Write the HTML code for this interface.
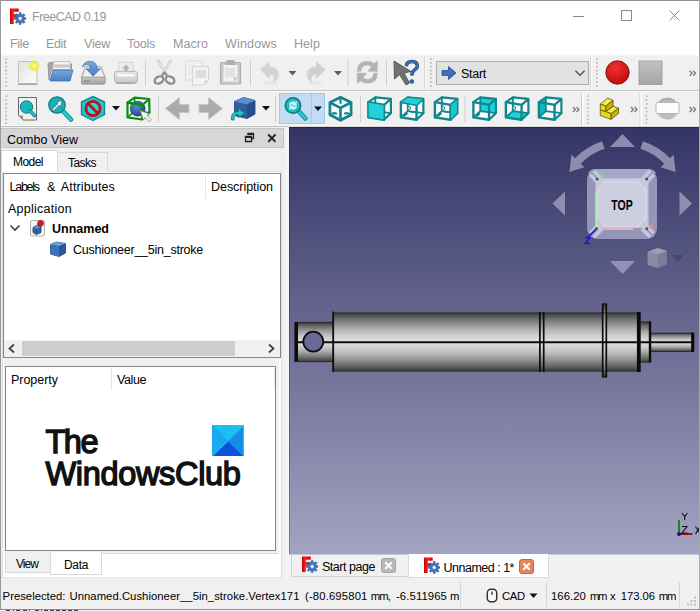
<!DOCTYPE html>
<html><head><meta charset="utf-8"><title>FreeCAD 0.19</title>
<style>
html,body{margin:0;padding:0;background:#fff;}
body{width:700px;height:611px;overflow:hidden;font-family:"Liberation Sans",sans-serif;}
#win{position:relative;width:700px;height:611px;overflow:hidden;background:#f0f0f0;}
#win div, #win svg, #win span{position:absolute;box-sizing:border-box;}
.t{white-space:nowrap;}

</style></head>
<body>
<div id="win">
<svg style="left:0;top:0;width:0;height:0" width="0" height="0">
 <defs>
  <linearGradient id="fred" x1="0" y1="0" x2="1" y2="0"><stop offset="0" stop-color="#c40000"/><stop offset=".35" stop-color="#ff1c1c"/><stop offset="1" stop-color="#c80606"/></linearGradient>
  <g id="fclogo">
   <path d="M10 8h8.700v3.300h-4.900v2.500h3.700v3h-3.700v6.800h-3.800z" fill="url(#fred)"/>
   <g transform="translate(20.200 18)">
    <path id="gear" fill="#4676ba" stroke="#2f5796" stroke-width=".6" stroke-linejoin="round" d="M-1.00 -4.18L-0.76 -6.05L0.76 -6.05L1.00 -4.18L2.25 -3.67L3.74 -4.82L4.82 -3.74L3.67 -2.25L4.18 -1.00L6.05 -0.76L6.05 0.76L4.18 1.00L3.67 2.25L4.82 3.74L3.74 4.82L2.25 3.67L1.00 4.18L0.76 6.05L-0.76 6.05L-1.00 4.18L-2.25 3.67L-3.74 4.82L-4.82 3.74L-3.67 2.25L-4.18 1.00L-6.05 0.76L-6.05 -0.76L-4.18 -1.00L-3.67 -2.25L-4.82 -3.74L-3.74 -4.82L-2.25 -3.67z"/>
    <circle r="1.9" fill="#fff" stroke="#2f5796" stroke-width=".5"/>
   </g>
  </g>
  <g id="chev2"><path d="M.7 .6l2.400 2.500l-2.400 2.500M4.200 .6l2.400 2.500l-2.400 2.500" fill="none" stroke="#757575" stroke-width="1.25"/></g>
 </defs>
</svg>
<!-- title + menu (white) -->
<div style="left:0;top:0;width:700px;height:55px;background:#fff"></div>
<svg style="left:9px;top:7.500px" width="17" height="17" viewBox="9 7.500 17 17"><use href="#fclogo"/></svg>
<!-- window controls -->
<svg style="left:570px;top:8px" width="124" height="16" viewBox="570 8 124 16" fill="none" stroke="#8a8a8a" stroke-width="1"><path d="M573 16.500h11"/><rect x="621.500" y="10.500" width="10" height="10"/><path d="M669.500 10.500l10 10M679.500 10.500l-10 10"/></svg>
<!-- toolbars background -->
<div style="left:0;top:55px;width:700px;height:72px;background:#f0f0f0"></div>
<div style="left:0;top:55px;width:700px;height:1px;background:#f7f7f7"></div>
<div style="left:0;top:90px;width:700px;height:1px;background:#c4c4c4"></div>
<div style="left:0;top:91px;width:700px;height:1px;background:#fbfbfb"></div>
<div style="left:0;top:125px;width:700px;height:2px;background:#f8f8f8"></div>
<div style="left:0;top:126px;width:289px;height:1px;background:#bdbdbd"></div>
<div style="left:289px;top:126px;width:411px;height:1px;background:#d6d6d6"></div>

<!-- TOOLBAR ROW 1 ICONS -->
<svg style="left:0;top:55px" width="700" height="36" viewBox="0 55 700 36">
 <defs>
  <linearGradient id="pg" x1="0" y1="0" x2="1" y2="1"><stop offset="0" stop-color="#e2e2e2"/><stop offset="1" stop-color="#fdfdfd"/></linearGradient>
  <radialGradient id="glow"><stop offset="0" stop-color="#fffde8"/><stop offset=".3" stop-color="#f8f150"/><stop offset=".65" stop-color="#f2ea30" stop-opacity=".85"/><stop offset="1" stop-color="#f2ea30" stop-opacity="0"/></radialGradient>
  <linearGradient id="bl" x1="0" y1="0" x2="0" y2="1"><stop offset="0" stop-color="#7aa7dd"/><stop offset="1" stop-color="#4a7fc4"/></linearGradient>
  <linearGradient id="gr" x1="0" y1="0" x2="0" y2="1"><stop offset="0" stop-color="#e8e8e8"/><stop offset="1" stop-color="#b8b8b8"/></linearGradient>
  <radialGradient id="redb" cx=".4" cy=".3" r=".8"><stop offset="0" stop-color="#f43030"/><stop offset="1" stop-color="#b80808"/></radialGradient>
  <linearGradient id="gsv" x1="0" y1="0" x2="0" y2="1"><stop offset="0" stop-color="#c6c6c6"/><stop offset="1" stop-color="#a2a2a2"/></linearGradient>
  <linearGradient id="gpr" x1="0" y1="0" x2="0" y2="1"><stop offset="0" stop-color="#e8e8e8"/><stop offset="1" stop-color="#c9c9c9"/></linearGradient>
  <linearGradient id="gsq" x1="0" y1="0" x2="0" y2="1"><stop offset="0" stop-color="#c2c2c2"/><stop offset="1" stop-color="#a6a6a6"/></linearGradient>
  <g id="hdl" fill="#b6b6b6"><path d="M0.5 0.00h1.600l-.3 1.800h-1.600z"/><path d="M0.1 3.86h1.600l-.3 1.800h-1.600z"/><path d="M0.5 7.72h1.600l-.3 1.800h-1.600z"/><path d="M0.1 11.58h1.600l-.3 1.800h-1.600z"/><path d="M0.5 15.44h1.600l-.3 1.800h-1.600z"/><path d="M0.1 19.30h1.600l-.3 1.800h-1.600z"/><path d="M0.5 23.16h1.600l-.3 1.800h-1.600z"/><path d="M0.1 27.02h1.600l-.3 1.800h-1.600z"/></g>
 </defs>
 <use href="#hdl" x="5.2" y="58"/>
 <!-- new -->
 <rect x="18.500" y="61.500" width="18.500" height="22" rx="1" fill="url(#pg)" stroke="#bdbdbd"/>
 <path d="M18 84.300h19.500" stroke="#a0a0a0" stroke-width="1.200"/>
 <circle cx="34" cy="66" r="6.2" fill="url(#glow)"/>
 <!-- open -->
 <path d="M48 63.500l1-1h4l1 1.500h17.500v5h-20l-2.500 11z" fill="#a8a8a8" stroke="#8a8a8a" stroke-width=".8"/>
 <path d="M53.500 61.500h16.500l.5 8h-18z" fill="#f2f2f2" stroke="#b0b0b0" stroke-width=".7"/>
 <path d="M54 64.500h16v3h-16.500z" fill="#c8c8c8"/>
 <path d="M53 70h20l-3 11h-20z" fill="url(#bl)" stroke="#3f6fb0" stroke-width=".8"/>
 <!-- save -->
 <path d="M85.5 66.5h15.500l4 10.500v6q0 1-1 1h-21.500q-1 0-1-1v-6z" fill="#dadada" stroke="#a6a6a6" stroke-width=".9"/>
 <path d="M86.300 67.800h13.900l3.200 8.700h-20.300z" fill="#f0f0f0"/>
 <path d="M81.600 77.200h23.400v5.800q0 1-1 1h-21.400q-1 0-1-1z" fill="url(#gsv)" stroke="#999" stroke-width=".8"/>
 <path d="M84 81h5.500" stroke="#888" stroke-width="1.300"/>
 <path d="M82.600 67.200q.8-6 7.400-6q6.800 0 7.200 7.600h3.300l-7.300 7.400l-7.200-7.400h4.300q-.2-4.400-3.600-4.400q-2.400 0-4.100 2.800z" fill="url(#bl)" stroke="#3a69aa" stroke-width=".6"/>
 <!-- print (disabled) -->
 <path d="M118.800 62.300h14.400v10h-14.400z" fill="#ededed" stroke="#cdcdcd" stroke-width=".8"/>
 <path d="M126 64.500l3.800 4.300h-2.200v3.200h-3.200v-3.200h-2.200z" fill="#b4b4b4"/>
 <rect x="114.500" y="71.300" width="23" height="11.400" rx="2.500" fill="url(#gpr)" stroke="#b0b0b0" stroke-width=".9"/>
 <path d="M117.500 75.300h17" stroke="#fbfbfb" stroke-width="2.200"/>
 <path d="M116.500 83.200h19" stroke="#a0a0a0" stroke-width="1.300"/>
 <rect class="s" x="145" y="60" width="1" height="26" fill="#cdcdcd"/>
 <!-- cut (disabled) -->
 <g fill="none">
  <path d="M158.500 61l8.500 14.500M170.500 61l-8.500 14.500" stroke="#c9c9c9" stroke-width="2.600" stroke-linecap="round"/>
  <path d="M158.500 61l8.500 14.500M170.500 61l-8.500 14.500" stroke="#f2f2f2" stroke-width="1"/>
  <ellipse cx="159" cy="80" rx="4.600" ry="3.300" transform="rotate(-30 159 80)" stroke="#8e8e8e" stroke-width="2.400"/>
  <ellipse cx="170" cy="80" rx="4.600" ry="3.300" transform="rotate(30 170 80)" stroke="#8e8e8e" stroke-width="2.400"/>
  <path d="M162 75.500l2.500-3l2.500 3" stroke="#8e8e8e" stroke-width="2"/>
 </g>
 <!-- copy (disabled) -->
 <g opacity=".8">
  <rect x="185.500" y="61" width="17" height="19" rx="1" fill="#f1f1f1" stroke="#d4d4d4"/>
  <path d="M188.500 66h6M188.500 68.500h6M188.500 71h6M188.500 73.500h6" stroke="#dcdcdc" stroke-width=".9"/>
  <path d="M192.500 66.500h16v14l-4 4.500h-12z" fill="#f4f4f4" stroke="#cfcfcf"/>
  <rect x="195.500" y="70" width="10.500" height="8" fill="#d9d9d9"/>
  <path d="M208.500 80.500h-4v4.500z" fill="#d0d0d0"/>
 </g>
 <!-- paste (disabled) -->
 <g opacity=".85">
  <rect x="220.500" y="62.500" width="20" height="21.500" rx="1" fill="#c4c4c4" stroke="#a4a4a4" stroke-width="1.200"/>
  <rect x="223.500" y="65" width="14" height="16.500" fill="#f3f3f3"/>
  <rect x="226" y="60" width="9" height="5" rx="1.500" fill="#a6a6a6"/>
  <rect x="225" y="68" width="10" height="9.500" fill="#e0e0e0"/>
  <path d="M237.500 77.500h-3.500v4z" fill="#b8b8b8"/>
 </g>
 <rect x="250" y="60" width="1" height="26" fill="#cdcdcd"/>
 <!-- undo (disabled) -->
 <path d="M260 69.500l9.500-8v5q9.500.5 9 9q-.5 5-5.500 6.500q3.500-7-3.500-7.500v4.500z" fill="#d3d3d3" stroke="#dedede" stroke-width=".6"/>
 <ellipse cx="270" cy="83" rx="8" ry="1.500" fill="#e4e4e4"/>
 <path d="M288.500 71h8l-4 4.400z" fill="#5c5c62"/>
 <!-- redo (disabled) -->
 <path d="M325.500 69.500l-9.500-8v5q-9.500.5-9 9q.5 5 5.500 6.500q-3.500-7 3.500-7.500v4.500z" fill="#cfcfcf" stroke="#dedede" stroke-width=".6"/>
 <ellipse cx="315" cy="83" rx="8" ry="1.500" fill="#e4e4e4"/>
 <path d="M334 71h8l-4 4.400z" fill="#5c5c62"/>
 <rect x="347.500" y="60" width="1" height="26" fill="#cdcdcd"/>
 <!-- refresh (disabled) -->
 <g fill="#b3b3b3" stroke="#c6c6c6" stroke-width=".5">
  <path id="rfa" d="M357 71.500Q357.200 61 367 61Q371.500 61 374 63.300L377.600 60.800V71.500H367.800L371.200 66.600Q369.500 65.200 367 65.200Q361.600 65.200 361 71.500z"/>
  <use href="#rfa" transform="rotate(180 367.300 72.200)"/>
 </g>
 <rect x="386" y="60" width="1" height="26" fill="#cdcdcd"/>
 <!-- whats this -->
 <path d="M394 61l.5 18l5-4.500l6.500 10.500l3.500-2l-5.500-10l7-1.500z" fill="#70726e" stroke="#50524e" stroke-width=".9" stroke-linejoin="round"/>
 <path d="M406.300 66.200q.3-4.700 5.700-4.700q5.300 0 5.300 4.300q0 2.600-2.800 4.200q-2.600 1.500-2.600 5.500" fill="none" stroke="#1f4277" stroke-width="3.400"/>
 <path d="M406.300 66.200q.3-4.700 5.700-4.700q5.300 0 5.300 4.300q0 2.600-2.800 4.200q-2.600 1.500-2.600 5.500" fill="none" stroke="#3b6cb0" stroke-width="2.300"/>
 <circle cx="411.800" cy="81.500" r="2" fill="#3465a4" stroke="#1f4277" stroke-width=".5"/>
 <!-- toolbar sep -->
 <rect x="424" y="56" width="1" height="34" fill="#d6d6d6"/><rect x="425" y="56" width="1" height="34" fill="#fcfcfc"/>
 <use href="#hdl" x="430" y="58"/>
 <!-- combo -->
 <rect x="436.500" y="61.500" width="152" height="23" fill="#e2e2e2" stroke="#adadad"/>
 <path d="M442 70.500h6.500v-4l7.500 6.500l-7.500 6.500v-4h-6.500z" fill="#3b6fb8" stroke="#264f8e" stroke-width=".8"/>
 <path d="M575.5 70.8l4.500 4.500l4.500-4.500" fill="none" stroke="#505050" stroke-width="1.250"/>
 <rect x="590" y="56" width="1" height="34" fill="#d6d6d6"/><rect x="591" y="56" width="1" height="34" fill="#fcfcfc"/>
 <use href="#hdl" x="596" y="58"/>
 <circle cx="617.500" cy="72.500" r="11.700" fill="url(#redb)" stroke="#7a1010" stroke-width=".9"/>
 <rect x="639" y="61" width="23" height="23.500" fill="url(#gsq)" stroke="#999" stroke-width=".8"/>
 <use href="#chev2" x="689" y="70.2"/>
</svg>

<!-- TOOLBAR ROW 2 ICONS -->
<svg style="left:0;top:91px" width="700" height="36" viewBox="0 91 700 36">
 <defs>
  <radialGradient id="sph" cx=".4" cy=".35" r=".7"><stop offset="0" stop-color="#5a8dd2"/><stop offset=".6" stop-color="#3465a4"/><stop offset="1" stop-color="#20427c"/></radialGradient>
  <g id="wc" fill="none" stroke="#0d7f85" stroke-width="1.900" stroke-linejoin="round">
   <!-- wire cube: front (1,6)-(16.5,25) ; back (7.500,1.500)-(23,19.500) -->
   <path d="M7.500 1.500h15.500v18h-15.500z" stroke-width="1.500"/>
   <path d="M1 6.500l6.500-5M16.500 6.500l6.500-5M16.500 25l6.500-5.500M1 25l6.500-5.500" stroke-width="1.500"/>
   <path d="M1 6.500h15.500v18.500h-15.500z"/>
  </g>
  <g id="wcdots" fill="#0d7f85"><ellipse cx="11.500" cy="13.500" rx="1.800" ry="1.800" fill="none" stroke="#0d7f85" stroke-width="1"/><ellipse cx="6" cy="20" rx="2" ry="1.100" transform="rotate(-35 6 20)"/><path d="M13 16.500h3.500" stroke="#0d7f85" stroke-width="1.300"/></g>
 </defs>
 <use href="#hdl" x="5.2" y="95.3"/>
 <!-- fit all: page + magnifier -->
 <path d="M18.500 97.500h18v22.500h-13.500l-4.500-4.500z" fill="#f1f1ec" stroke="#666" stroke-width="1"/>
 <path d="M18.500 115.500h4.500v4.500z" fill="#999"/>
 <circle cx="26.500" cy="107" r="6.200" fill="#19b6bd" stroke="#0c7e84" stroke-width="1"/>
 <path d="M30 111l4.500 4.500" stroke="#0c7e84" stroke-width="3.600" stroke-linecap="round"/>
 <path d="M30 111l4.500 4.500" stroke="#1fc4cc" stroke-width="2" stroke-linecap="round"/>
 <!-- zoom selection -->
 <path d="M62 110l9 9.500" stroke="#0c7e84" stroke-width="4.600" stroke-linecap="round"/>
 <path d="M62 110l9 9.500" stroke="#22cdd5" stroke-width="2.800" stroke-linecap="round"/>
 <circle cx="57" cy="105" r="8.200" fill="#15b2b9" stroke="#0c7e84" stroke-width="1.300"/>
 <path d="M62 100.500l-1 6l-1.500-1.500l-6 6l-1.500-1.500l6-6l-1.500-1.500z" fill="#f4f4f4" stroke="#555" stroke-width=".7"/>
 <!-- draw style hexagon -->
 <path d="M93 96.500l11.500 5.500v12.500l-11.500 6l-11.500-6v-12.500z" fill="#1fc8d0" stroke="#0d8e95" stroke-width="1.400"/>
 <circle cx="93" cy="108.500" r="7.100" fill="#27d7df" stroke="#b51616" stroke-width="2.900"/>
 <path d="M88 103.500l10 10" stroke="#b51616" stroke-width="2.900"/>
 <path d="M112 106h8l-4 4.500z" fill="#111"/>
 <!-- bounding box -->
 <path d="M127.500 102.700l7.100-5l14.600 1.300l.3 13.600l-7.300 6.900l-14.700-2.100z" fill="#f6f6f6"/>
 <path d="M134.600 97.700v13.500l-7.100 6.200M134.600 111.200l14.900 1.400" fill="none" stroke="#0a9a14" stroke-width="1.600"/>
 <circle cx="137.700" cy="108.700" r="7.400" fill="url(#sph)" stroke="#1d3a70" stroke-width=".7"/>
 <g fill="none" stroke="#0c8c15" stroke-width="2.2" stroke-linejoin="round">
  <path d="M127.500 102.700l7.100-5l14.600 1.300l-6.800 6zM149.200 99l.3 13.600l-7.300 6.900"/>
  <path d="M127.500 102.700l14.900 2.300l-.2 14.500l-14.700-2.100z"/>
 </g>
 <path d="M140.100 110.500l9.500 3.500l-2.600 1.500l4.300 4.300l-2 2l-4.300-4.300l-1.500 2.600z" fill="#f8f8f8" stroke="#777" stroke-width=".7"/>
 <rect x="158" y="96" width="1" height="26" fill="#cdcdcd"/>
 <!-- back/forward -->
 <path d="M165.500 108.500l14-11v7h9.500v8h-9.500v7z" fill="#ababab" stroke="#c4c4c4" stroke-width=".8"/>
 <path d="M222.500 108.500l-14-11v7h-9.500v8h9.500v7z" fill="#ababab" stroke="#c4c4c4" stroke-width=".8"/>
 <!-- link cube -->
 <path d="M234.500 101.500l9-4l11.500 3v13.500l-8 4.500l-12.500-3z" fill="#2f5f9f" stroke="#1d3f72" stroke-width=".8"/>
 <path d="M234.500 101.500l9-4l11.500 3l-8 4z" fill="#5a8ed0"/>
 <path d="M247 104.500l8-4v13.500l-8 4.500z" fill="#234f8c"/>
 <path d="M231.500 120q-1.500-8 7-8.500v-3l6 4.500l-6 4.500v-3q-5 0-4.500 5.500z" fill="#1fc4cc" stroke="#0b747a" stroke-width=".8"/>
 <path d="M262 106h8l-4 4.500z" fill="#111"/>
 <rect x="275" y="96" width="1" height="26" fill="#cdcdcd"/>
 <!-- highlighted button -->
 <rect x="279.5" y="93.5" width="45" height="30" fill="#c2dcf3" stroke="#9ccaf0"/>
 <rect x="311" y="94" width="1" height="29" fill="#9ccaf0"/>
 <path d="M299 111.500l6.500 7" stroke="#0c7e84" stroke-width="4.400" stroke-linecap="round"/>
 <path d="M299 111.500l6.500 7" stroke="#22cdd5" stroke-width="2.600" stroke-linecap="round"/>
 <circle cx="293" cy="105.500" r="7.700" fill="#17b3bb" stroke="#0b7a80" stroke-width="1.500"/>
 <circle cx="293" cy="105.500" r="5.600" fill="none" stroke="#23cad2" stroke-width="1"/>
 <path d="M289 104.600q1-3.300 4.600-3l2 .8l.8-1.400v4.200h-4.200l1.400-1.200q-2.200-1-3.200 1.200zM297 106.400q-1 3.300-4.600 3l-2-.8l-.8 1.400v-4.200h4.200l-1.400 1.200q2.200 1 3.200-1.200z" fill="#d4f6f6" stroke="#d4f6f6" stroke-width=".5"/>
 <path d="M314 106.500h8l-4 4.500z" fill="#111"/>
 <!-- iso wire cube -->
 <g fill="none" stroke="#0e858b" stroke-linejoin="round">
  <path d="M340.500 97.300l10.600 5.200v12.200l-10.600 5.600l-10.600-5.600v-12.200z" fill="#fbfbfb" stroke-width="2.700"/>
  <path d="M329.900 102.500l10.600 5.300l10.600-5.300M340.500 107.800v12.500" stroke-width="2.600"/>
  <path d="M340.500 97.300v6.500" stroke-width="2"/>
  <path d="M329.900 114.700l4.500-2.300M351.100 114.700l-4.500-2.300" stroke-width="1.300"/>
 </g>
 <ellipse cx="335" cy="113.400" rx="2.200" ry="1.200" fill="#0e858b"/><ellipse cx="346" cy="113.400" rx="2.200" ry="1.200" fill="#0e858b"/>
 <rect x="360" y="96" width="1" height="26" fill="#cdcdcd"/>
 <!-- front -->
 <g transform="translate(367.5 95.5)" stroke-linejoin="round" stroke-linecap="round"><path d="M0.9 6.6L7.8 1.9L23.4 3.4L23.4 17.6L16.5 24.3L0.9 21.9z" fill="#fbfbfb"/><path d="M7.8 1.9 L7.8 15.6 M7.8 15.6 L23.4 17.6 M7.8 15.6 L0.9 21.9" fill="none" stroke="#0f878d" stroke-width="1.9"/><path d="M7.8 1.9 L23.4 3.4 M23.4 3.4 L23.4 17.6 M7.8 1.9 L0.9 6.6 M23.4 3.4 L16.6 9.4 M23.4 17.6 L16.5 24.3" fill="none" stroke="#0f878d" stroke-width="2.2"/><path d="M0.9 6.6L16.6 9.4L16.5 24.3L0.9 21.9z" fill="none" stroke="#0f878d" stroke-width="2.4"/><path d="M0.9 6.6L16.6 9.4L16.5 24.3L0.9 21.9z" fill="#1fd2da" stroke="#0f878d" stroke-width="1"/></g>
 <g transform="translate(400 95.5)" stroke-linejoin="round" stroke-linecap="round"><path d="M0.9 6.6L7.8 1.9L23.4 3.4L23.4 17.6L16.5 24.3L0.9 21.9z" fill="#fbfbfb"/><path d="M7.8 1.9 L7.8 15.6 M7.8 15.6 L23.4 17.6 M7.8 15.6 L0.9 21.9" fill="none" stroke="#0f878d" stroke-width="1.9"/><ellipse cx="9.2" cy="12.6" rx="1.3" ry="2" fill="#fbfbfb" stroke="#0f878d" stroke-width="1"/><path d="M4.3 20.2l2.400-2" stroke="#0f878d" stroke-width="2" fill="none"/><path d="M11.500 16.700h2.500" stroke="#0f878d" stroke-width="1.300" fill="none"/><path d="M7.8 1.9 L23.4 3.4 M23.4 3.4 L23.4 17.6 M7.8 1.9 L0.9 6.6 M23.4 3.4 L16.6 9.4 M23.4 17.6 L16.5 24.3" fill="none" stroke="#0f878d" stroke-width="2.2"/><path d="M0.9 6.6L16.6 9.4L16.5 24.3L0.9 21.9z" fill="none" stroke="#0f878d" stroke-width="2.4"/><path d="M0.9 6.6L7.8 1.9L23.4 3.4L16.6 9.4z" fill="#1fd2da" stroke="#0f878d" stroke-width="1"/></g>
 <g transform="translate(434 95.5)" stroke-linejoin="round" stroke-linecap="round"><path d="M0.9 6.6L7.8 1.9L23.4 3.4L23.4 17.6L16.5 24.3L0.9 21.9z" fill="#fbfbfb"/><path d="M7.8 1.9 L7.8 15.6 M7.8 15.6 L23.4 17.6 M7.8 15.6 L0.9 21.9" fill="none" stroke="#0f878d" stroke-width="1.9"/><ellipse cx="9.2" cy="12.6" rx="1.3" ry="2" fill="#fbfbfb" stroke="#0f878d" stroke-width="1"/><path d="M4.3 20.2l2.400-2" stroke="#0f878d" stroke-width="2" fill="none"/><path d="M11.500 16.700h2.500" stroke="#0f878d" stroke-width="1.300" fill="none"/><path d="M7.8 1.9 L23.4 3.4 M23.4 3.4 L23.4 17.6 M7.8 1.9 L0.9 6.6 M23.4 3.4 L16.6 9.4 M23.4 17.6 L16.5 24.3" fill="none" stroke="#0f878d" stroke-width="2.2"/><path d="M0.9 6.6L16.6 9.4L16.5 24.3L0.9 21.9z" fill="none" stroke="#0f878d" stroke-width="2.4"/><path d="M16.6 9.4L23.4 3.4L23.4 17.6L16.5 24.3z" fill="#1cc6ce" stroke="#0f878d" stroke-width="1"/></g>
 <rect x="464.5" y="96" width="1" height="26" fill="#cdcdcd"/>
 <g transform="translate(472.5 95.5)" stroke-linejoin="round" stroke-linecap="round"><path d="M0.9 6.6L7.8 1.9L23.4 3.4L23.4 17.6L16.5 24.3L0.9 21.9z" fill="#fbfbfb"/><path d="M7.8 1.9L23.4 3.4L23.4 17.6L7.8 15.6z" fill="#1fd2da"/><path d="M7.8 1.9 L7.8 15.6 M7.8 15.6 L23.4 17.6 M7.8 15.6 L0.9 21.9" fill="none" stroke="#0f878d" stroke-width="1.9"/><path d="M4.300 20.500l2.400-2" stroke="#0f878d" stroke-width="2" fill="none"/><path d="M7.8 1.9 L23.4 3.4 M23.4 3.4 L23.4 17.6 M7.8 1.9 L0.9 6.6 M23.4 3.4 L16.6 9.4 M23.4 17.6 L16.5 24.3" fill="none" stroke="#0f878d" stroke-width="2.2"/><path d="M0.9 6.6L16.6 9.4L16.5 24.3L0.9 21.9z" fill="none" stroke="#0f878d" stroke-width="2.4"/></g>
 <g transform="translate(505 95.5)" stroke-linejoin="round" stroke-linecap="round"><path d="M0.9 6.6L7.8 1.9L23.4 3.4L23.4 17.6L16.5 24.3L0.9 21.9z" fill="#fbfbfb"/><path d="M0.9 21.9L16.5 24.3L23.4 17.6L7.8 15.6z" fill="#1fd2da"/><path d="M7.8 1.9 L7.8 15.6 M7.8 15.6 L23.4 17.6 M7.8 15.6 L0.9 21.9" fill="none" stroke="#0f878d" stroke-width="1.9"/><ellipse cx="9.2" cy="12.6" rx="1.3" ry="2" fill="#fbfbfb" stroke="#0f878d" stroke-width="1"/><path d="M7.8 1.9 L23.4 3.4 M23.4 3.4 L23.4 17.6 M7.8 1.9 L0.9 6.6 M23.4 3.4 L16.6 9.4 M23.4 17.6 L16.5 24.3" fill="none" stroke="#0f878d" stroke-width="2.2"/><path d="M0.9 6.6L16.6 9.4L16.5 24.3L0.9 21.9z" fill="none" stroke="#0f878d" stroke-width="2.4"/></g>
 <g transform="translate(538 95.5)" stroke-linejoin="round" stroke-linecap="round"><path d="M0.9 6.6L7.8 1.9L23.4 3.4L23.4 17.6L16.5 24.3L0.9 21.9z" fill="#fbfbfb"/><path d="M0.9 6.6L7.8 1.9L7.8 15.6L0.9 21.9z" fill="#16b6be"/><path d="M7.8 1.9 L7.8 15.6 M7.8 15.6 L23.4 17.6 M7.8 15.6 L0.9 21.9" fill="none" stroke="#0f878d" stroke-width="1.9"/><path d="M7.8 1.9 L23.4 3.4 M23.4 3.4 L23.4 17.6 M7.8 1.9 L0.9 6.6 M23.4 3.4 L16.6 9.4 M23.4 17.6 L16.5 24.3" fill="none" stroke="#0f878d" stroke-width="2.2"/><path d="M0.9 6.6L16.6 9.4L16.5 24.3L0.9 21.9z" fill="none" stroke="#0f878d" stroke-width="2.4"/></g>
 <use href="#chev2" x="572.3" y="106.4"/>
 <rect x="581" y="92" width="1" height="34" fill="#cfcfcf"/><rect x="582" y="92" width="1.5" height="34" fill="#fdfdfd"/>
 <use href="#hdl" x="587.2" y="95.3"/>
 <!-- yellow part -->
 <g stroke="#5e5200" stroke-width=".8" stroke-linejoin="round">
  <path d="M600.3 104.1l7.400-6l5.400 2.300l-7.300 5.700z" fill="#f6ea50"/>
  <path d="M600.3 104.1l5.500 2v5.500l-5.500-1.700z" fill="#ead820"/>
  <path d="M605.800 106.100l7.300-5.700v6l-7.300 5.200z" fill="#c4b010"/>
  <path d="M605.800 111.600l7.300-5.200l5.500 1.700l-7.500 5.500z" fill="#f6ea50"/>
  <path d="M600.3 109.900l10.800 3.700v5.700l-10.800-3.700z" fill="#ead820"/>
  <path d="M611.100 113.600l7.500-5.500v5.200l-7.500 6z" fill="#c4b010"/>
 </g>
 <use href="#chev2" x="630.3" y="106.4"/>
 <rect x="639.5" y="92" width="1" height="34" fill="#cfcfcf"/><rect x="640.5" y="92" width="1.5" height="34" fill="#fdfdfd"/>
 <use href="#hdl" x="645.6" y="95.3"/>
 <!-- measure (disabled) -->
 <circle cx="667.500" cy="108.500" r="11" fill="#bdbdbd"/>
 <path d="M660 101.500q7.500-5 15 0" fill="none" stroke="#9a9a9a" stroke-width="1.500" stroke-dasharray="1.500 1.200"/>
 <rect x="656" y="102.500" width="23" height="11" rx="1" fill="#fdfdfd" stroke="#b0b0b0" stroke-width=".9"/>
 <use href="#chev2" x="689" y="106.4"/>
</svg>


<!-- LEFT DOCK -->
<!-- dock bg -->
<div style="left:1px;top:127px;width:286px;height:451px;background:#f0f0f0"></div>
<!-- splitter strip -->
<div style="left:286px;top:127px;width:3px;height:451px;background:#f5f5f5"></div>
<!-- Combo view title -->
<div style="left:1px;top:128px;width:283px;height:20px;background:#d7d7d7;border:1px solid #c4c4c4;border-left:none"></div>
<!-- float icon -->
<svg style="left:244px;top:132px" width="12" height="12" viewBox="0 0 12 12"><path d="M3.5 1.5h6v5h-2M1.5 4.5h6v5h-6z" fill="none" stroke="#222" stroke-width="1.3"/><path d="M3.5 2h6M1.5 5h6" stroke="#222" stroke-width="1.8"/></svg>
<!-- close icon -->
<svg style="left:266px;top:132px" width="12" height="12" viewBox="0 0 12 12"><path d="M2.2 2.5l7.3 7.3M9.5 2.5l-7.3 7.3" stroke="#222" stroke-width="1.9"/></svg>
<!-- tab widget pane -->
<div style="left:2px;top:171px;width:280px;height:407px;background:#fff;border:1px solid #dcdcdc;border-bottom-color:#e6e6e6"></div>
<div style="left:4px;top:358px;width:275px;height:195px;background:#f0f0f0"></div>
<!-- Tasks tab (inactive) -->
<div style="left:57px;top:152px;width:51px;height:20px;background:#f0f0f0;border:1px solid #d9d9d9;border-bottom:none"></div>
<!-- Model tab (active) -->
<div style="left:1px;top:150px;width:57px;height:22px;background:#fff;border:1px solid #d9d9d9;border-bottom:none"></div>
<!-- tree frame -->
<div style="left:3px;top:173px;width:278px;height:185px;background:#fff;border:1px solid #828790"></div>
<!-- header divider -->
<div style="left:205px;top:174px;width:1px;height:25px;background:#e5e5e5"></div>
<!-- chevron -->
<svg style="left:8px;top:222px" width="14" height="12" viewBox="0 0 14 12"><path d="M2.5 3.5l4.5 4.5l4.5-4.5" fill="none" stroke="#404040" stroke-width="1.6"/></svg>
<!-- doc icon -->
<svg style="left:29px;top:219px" width="18" height="18" viewBox="0 0 18 18">
 <rect x="1.5" y="1.5" width="14" height="15.5" rx="1.5" fill="#f4f4f4" stroke="#b0b0b0"/>
 <path d="M4 8.5l4.5-2.5l3.5 1.5v6l-4.5 2l-3.5-2z" fill="#3465a4" stroke="#1d3a68" stroke-width=".8"/>
 <path d="M4 8.5l3.5 1.8l4.5-2.8M7.5 10.3v5" fill="none" stroke="#1d3a68" stroke-width=".7"/>
 <path d="M4 8.5l4.5-2.5l3.5 1.5l-4.5 2.8z" fill="#5b8fd0"/>
 <circle cx="11.5" cy="4.3" r="2.9" fill="#e01818" stroke="#8a0c0c" stroke-width=".7"/>
</svg>
<!-- cube icon -->
<svg style="left:49px;top:240px" width="18" height="18" viewBox="0 0 18 18">
 <path d="M1.5 4.5l6-2.5l9 1.5v9.5l-6.5 3.5l-8.5-2.5z" fill="#3465a4" stroke="#21487d" stroke-width=".8"/>
 <path d="M1.5 4.5l6-2.5l9 1.5l-6.5 2.5z" fill="#6ea0dc"/>
 <path d="M10 6v10.5l6.500-3.5v-9.500z" fill="#2a579a"/>
 <path d="M1.5 4.5l8.500 1.500v10.500l-8.500-2.500z" fill="#3c72ba"/>
</svg>
<!-- scrollbar -->
<div style="left:4px;top:340px;width:276px;height:17px;background:#f0f0f0"></div>
<div style="left:22px;top:341px;width:213px;height:15px;background:#cdcdcd"></div>
<svg style="left:7px;top:343px" width="10" height="11" viewBox="0 0 10 11"><path d="M7 1.500l-4.500 4l4.500 4" fill="none" stroke="#404040" stroke-width="1.7"/></svg>
<svg style="left:266px;top:343px" width="10" height="11" viewBox="0 0 10 11"><path d="M3 1.500l4.500 4l-4.500 4" fill="none" stroke="#404040" stroke-width="1.7"/></svg>

<!-- property frame -->
<div style="left:4px;top:553px;width:275px;height:1px;background:#dcdcdc"></div>
<div style="left:5px;top:366px;width:271px;height:185px;background:#fff;border:1px solid #828790"></div>
<div style="left:111px;top:368px;width:1px;height:22px;background:#e5e5e5"></div>
<div style="left:274px;top:368px;width:1px;height:22px;background:#e5e5e5"></div>
<!-- logo square -->
<svg style="left:212px;top:425px" width="31.5" height="31" viewBox="0 0 31.5 31">
 <rect width="31.5" height="31" fill="#18a6ee"/>
 <path d="M0 0h31.5l-15.750 15.500z" fill="#1cc0f0"/>
 <path d="M31.5 0v31l-15.750-15.500z" fill="#118ee4"/>
 <path d="M0 31h31.5l-15.750-15.500z" fill="#0b52dc"/>
 <path d="M0 0v31l15.750-15.500z" fill="#19a9ee"/>
 <path d="M0 31l31.500-31" stroke="#2eb2f6" stroke-width="1.600"/>
 <path d="M15.750 15.500l15.750 15.500" stroke="#2a86ea" stroke-width="1"/>
</svg>
<!-- bottom tabs -->
<div style="left:5px;top:553px;width:46px;height:20px;background:#f0f0f0;border:1px solid #d9d9d9;border-top:none"></div>
<div style="left:50px;top:552px;width:52px;height:23px;background:#fff;border:1px solid #d9d9d9;border-top:none"></div>


<!-- VIEWPORT -->
<div id="vp" style="left:289px;top:127px;width:410px;height:427px;overflow:hidden;background:linear-gradient(#343466,#a3a3c2)">
<div style="left:0;top:0;width:410px;height:1px;background:rgba(20,20,70,.45)"></div><div style="left:0;top:0;width:1px;height:427px;background:rgba(20,20,70,.3)"></div>
<svg style="left:0;top:0" width="410" height="427" viewBox="289 127 410 427">
 <defs>
  <linearGradient id="cyl" x1="0" y1="0" x2="0" y2="1">
   <stop offset="0" stop-color="#3a3a3a"/><stop offset=".1" stop-color="#6c6c6c"/><stop offset=".18" stop-color="#8c8c8c"/><stop offset=".28" stop-color="#b2b2b2"/><stop offset=".39" stop-color="#cfcfcf"/><stop offset=".48" stop-color="#dddddd"/>
   <stop offset=".52" stop-color="#dddddd"/><stop offset=".61" stop-color="#cfcfcf"/><stop offset=".72" stop-color="#b2b2b2"/><stop offset=".82" stop-color="#8c8c8c"/><stop offset=".9" stop-color="#6c6c6c"/><stop offset="1" stop-color="#3a3a3a"/>
  </linearGradient>
 </defs>
 <!-- MODEL -->
 <rect x="296" y="322.5" width="37" height="39" fill="url(#cyl)"/>
 <rect x="333" y="312.8" width="305" height="58.4" fill="url(#cyl)"/>
 <rect x="602.5" y="303.8" width="4" height="73.4" fill="url(#cyl)"/>
 <rect x="640" y="321.8" width="10.5" height="40.4" fill="url(#cyl)"/>
 <rect x="650.5" y="333" width="42" height="18.6" fill="url(#cyl)"/>
 <g stroke="#0c0c0c" fill="none">
  <path d="M296.2 322v40" stroke-width="3.6"/>
  <path d="M296 322.4h37M296 361.600h37" stroke-width=".9" stroke="#222"/>
  <path d="M333.2 311.6v60.600" stroke-width="1.800"/>
  <path d="M333 312.900h305M333 371.100h305" stroke-width=".8" stroke="#2a2a2a"/>
  <path d="M297 342.300h396" stroke-width="2"/>
  <circle cx="313.300" cy="341.600" r="10" fill="#69699a" stroke-width="1.700"/>
  <path d="M539.900 312v60M543.700 312v60" stroke-width="1.700"/>
  <path d="M602.700 303.500v74M606.300 303.500v74" stroke-width="1.700"/>
  <path d="M602.700 304h3.600M602.700 377h3.600" stroke-width="1"/>
  <path d="M638.800 312v60" stroke-width="3.800"/>
  <path d="M640 322h10.500M640 362h10.500" stroke-width=".9" stroke="#222"/>
  <path d="M650 321.500v41" stroke-width="2.400"/>
  <path d="M651 333.200h41M651 351.400h41" stroke-width=".9" stroke="#222"/>
  <path d="M692.700 332.500v19.500" stroke-width="3.200"/>
 </g>
 <!-- NAVCUBE -->
 <g fill="#a3a3c2" opacity=".78">
  <path d="M622.500 134l-12.500 13h25z"/>
  <path d="M622.500 274l-12.500-13h25z"/>
  <path d="M552.500 203.500l12.500-12v24z"/>
  <path d="M692 203.500l-12.500-12v24z"/>
  <path d="M602.1 141.2A66 66 0 0 0 575 158.2L571.4 154.7L569.4 172.1L584.4 167.2L580.8 163.7A58 58 0 0 1 604.6 148.8z"/>
  <path d="M642.9 141.2A66 66 0 0 1 670 158.2L673.6 154.7L675.6 172.1L660.6 167.2L664.2 163.7A58 58 0 0 0 640.4 148.8z"/>
 </g>
 <rect x="587" y="169" width="70" height="70" rx="11" fill="#9595ba"/>
 <path d="M596 169h52q5 0 8 4l-8 6h-52l-8-6q3-4 8-4z" fill="#a6a6c7"/>
 <g fill="#c4c4da">
  <path d="M589 176l6-6.500l8.500 8.500l-6.500 6.500z"/><path d="M655 176l-6-6.500l-8.500 8.500l6.500 6.500z"/>
  <path d="M589 232l6 6.500l8.500-8.500l-6.500-6.500z"/><path d="M655 232l-6 6.500l-8.500-8.500l6.500-6.500z"/>
 </g>
 <g stroke="#8e8eb2" stroke-width="1.200"><path d="M590 171l8 8M654 171l-8 8M590 237l8-8M654 237l-8-8"/></g>
 <rect x="595.500" y="178.200" width="53" height="49.800" rx="1.500" fill="#c9c9dc"/>
 <path d="M598 188.500q4.500-1 6-6.500h35.500q1.500 5.500 6 6.500v31q-4.500 1-6 6.500h-35.500q-1.500-5.500-6-6.500z" fill="#cdcde0" stroke="#dedeee" stroke-width=".9"/>
 <g fill="#47476c"><circle cx="597.200" cy="179.200" r="1.400"/><circle cx="646.700" cy="179.200" r="1.400"/><circle cx="646.700" cy="228.700" r="1.400"/></g>
 <path d="M596.200 192v36.500" stroke="#a4f2a4" stroke-width="1.800"/>
 <path d="M597 229.100h36" stroke="#f2b4b4" stroke-width="1.800"/>
 <path d="M596.200 229.100l-8 7.800" stroke="#1c1cf0" stroke-width="1.900"/>
 <circle cx="596.700" cy="228.600" r="1.300" fill="#d01010"/><circle cx="596.200" cy="227.800" r=".9" fill="#10b010"/>
 <path d="M599.500 172.500l2.600 3.500l2.600-3.500M602.100 176v3.200" stroke="#60e860" stroke-width="1.100" fill="none"/>
 <path d="M649 222.500l5.500 6.500M654.500 222.500l-5.500 6.500" stroke="#e88a8a" stroke-width="1.100" fill="none"/>
 <path d="M585.200 237.500h4.700l-4.700 5.800h4.900" stroke="#1010f0" stroke-width="1.300" fill="none"/>
 <text x="611.2" y="210.3" font-family="Liberation Sans, sans-serif" font-size="15.5" font-weight="700" textLength="21.5" lengthAdjust="spacingAndGlyphs" fill="#000">TOP</text>
 <!-- mini cube -->
 <path d="M647.500 252l10-4l9.500 3v13l-9.500 4l-10-3z" fill="#8a8aa6"/>
 <path d="M647.500 252l10-4l9.500 3l-9.500 3.500z" fill="#9c9cb6"/>
 <path d="M657.500 254.500l9.500-3.500v13l-9.500 4z" fill="#7c7c98"/>
 <path d="M671.500 255h12.500l-6.250 6.500z" fill="#47476a"/>
 <!-- axis cross -->
 <path d="M679 520v14" stroke="#109010" stroke-width="2"/>
 <path d="M679 534h13.500" stroke="#a01010" stroke-width="2"/>
 <circle cx="679" cy="534" r="2" fill="#101090"/>
 <g stroke="#111" stroke-width="1.100" fill="none">
  <path d="M682 513l2.700 3.500l2.700-3.500M684.700 516.500v3.500"/>
  <path d="M682 526.500h5l-5 6.500h5.500"/>
  <path d="M695.500 526.500l5 7.500M700 526.500l-4.500 7.500"/>
 </g>
</svg>
</div>


<!-- MDI TABS -->
<div style="left:289px;top:554px;width:410px;height:24px;background:#f0f0f0"></div>
<div style="left:289px;top:554px;width:410px;height:1px;background:#c6c6d8"></div>
<!-- start page tab -->
<div style="left:291px;top:555px;width:118px;height:22px;background:#f0f0f0;border:1px solid #d4d4d4;border-top:none"></div>
<!-- active tab -->
<div style="left:408px;top:554px;width:141px;height:24px;background:#fff;border:1px solid #dcdcdc;border-top:none"></div>
<svg style="left:301px;top:556px" width="17" height="17" viewBox="9 7.500 17 17"><use href="#fclogo"/></svg>
<svg style="left:423px;top:557px" width="17" height="17" viewBox="9 7.500 17 17"><use href="#fclogo"/></svg>
<svg style="left:381px;top:558px" width="15" height="15" viewBox="0 0 15 15"><rect x=".5" y=".5" width="14" height="14" rx="2.500" fill="#b9b9b9" stroke="#a2a2a2"/><path d="M4.300 4.300l6.400 6.400M10.700 4.300l-6.400 6.400" stroke="#fff" stroke-width="2"/></svg>
<svg style="left:519px;top:559px" width="15" height="15" viewBox="0 0 15 15"><rect x=".5" y=".5" width="14" height="14" rx="2.500" fill="#e5845a" stroke="#d0603a"/><path d="M4.300 4.300l6.400 6.400M10.700 4.300l-6.400 6.400" stroke="#fff" stroke-width="2"/></svg>


<!-- STATUS -->
<div style="left:1px;top:578px;width:698px;height:31px;background:#f0f0f0"></div>
<div style="left:460px;top:582px;width:1px;height:25px;background:#d5d5d5"></div>
<div style="left:546px;top:582px;width:1px;height:25px;background:#d5d5d5"></div>
<div style="left:679px;top:582px;width:1px;height:25px;background:#d5d5d5"></div>
<svg style="left:486px;top:588px" width="12" height="15" viewBox="0 0 12 15"><rect x="1.300" y="1.200" width="9.400" height="12.600" rx="3.500" fill="#fafafa" stroke="#333" stroke-width="1.500"/><path d="M6 3.500v3.200" stroke="#333" stroke-width="1.400"/></svg>
<svg style="left:529px;top:593px" width="9" height="6" viewBox="0 0 9 6"><path d="M.5 .5h8l-4 4.500z" fill="#111"/></svg>
<svg style="left:686px;top:595px" width="12" height="12" viewBox="0 0 12 12" fill="#bdbdbd"><rect x="8" y="1.500" width="2" height="2"/><rect x="4.500" y="5" width="2" height="2"/><rect x="8" y="5" width="2" height="2"/><rect x="1" y="8.500" width="2" height="2"/><rect x="4.500" y="8.500" width="2" height="2"/><rect x="8" y="8.500" width="2" height="2"/></svg>


<!-- window border -->
<div style="left:0;top:0;width:700px;height:1px;background:#8f8f8f"></div>
<div style="left:0;top:0;width:1px;height:611px;background:#9a9a9a"></div>
<div style="left:699px;top:0;width:1px;height:611px;background:#a8a8a8"></div>
<div style="left:0;top:609px;width:700px;height:1px;background:#8c8c8c"></div>
<div style="left:0;top:610px;width:700px;height:1px;background:#f4f4f4"></div><div style="left:6px;top:610px;width:4px;height:1px;background:#444"></div><div style="left:13px;top:610px;width:1px;height:1px;background:#444"></div><div style="left:16px;top:610px;width:4px;height:1px;background:#444"></div><div style="left:23px;top:610px;width:4px;height:1px;background:#444"></div><div style="left:29px;top:610px;width:1px;height:1px;background:#444"></div><div style="left:35px;top:610px;width:4px;height:1px;background:#444"></div><div style="left:41px;top:610px;width:1px;height:1px;background:#444"></div><div style="left:44px;top:610px;width:4px;height:1px;background:#444"></div><div style="left:50px;top:610px;width:4px;height:1px;background:#444"></div><div style="left:56px;top:610px;width:4px;height:1px;background:#444"></div><div style="left:62px;top:610px;width:4px;height:1px;background:#444"></div><div style="left:68px;top:610px;width:4px;height:1px;background:#444"></div><div style="left:74px;top:610px;width:4px;height:1px;background:#444"></div>

<span class="t" style="left:32px;top:8.5px;font-size:12.5px;line-height:16px;font-weight:400;color:#989898;letter-spacing:-0.492px">FreeCAD 0.19</span>
<span class="t" style="left:10px;top:36.0px;font-size:12.5px;line-height:16px;font-weight:400;color:#979797;letter-spacing:-0.289px">File</span>
<span class="t" style="left:46px;top:36.0px;font-size:12.5px;line-height:16px;font-weight:400;color:#979797;letter-spacing:-0.387px">Edit</span>
<span class="t" style="left:84px;top:36.0px;font-size:12.5px;line-height:16px;font-weight:400;color:#979797;letter-spacing:-0.219px">View</span>
<span class="t" style="left:127px;top:36.0px;font-size:12.5px;line-height:16px;font-weight:400;color:#979797;letter-spacing:-0.237px">Tools</span>
<span class="t" style="left:173px;top:36.0px;font-size:12.5px;line-height:16px;font-weight:400;color:#979797;letter-spacing:0.053px">Macro</span>
<span class="t" style="left:225px;top:36.0px;font-size:12.5px;line-height:16px;font-weight:400;color:#979797;letter-spacing:0.183px">Windows</span>
<span class="t" style="left:294px;top:36.0px;font-size:12.5px;line-height:16px;font-weight:400;color:#979797;letter-spacing:0.070px">Help</span>
<span class="t" style="left:7px;top:131.7px;font-size:12.5px;line-height:16px;font-weight:400;color:#000;letter-spacing:0.036px">Combo View</span>
<span class="t" style="left:13px;top:153.5px;font-size:12px;line-height:16px;font-weight:400;color:#000;letter-spacing:-0.537px">Model</span>
<span class="t" style="left:68px;top:154.5px;font-size:12px;line-height:16px;font-weight:400;color:#000;letter-spacing:-0.537px">Tasks</span>
<span class="t" style="left:9.5px;top:179.2px;font-size:12.5px;line-height:16px;font-weight:400;color:#000;letter-spacing:-1.257px">Labels</span>
<span class="t" style="left:47px;top:179.2px;font-size:12.5px;line-height:16px;font-weight:400;color:#000;letter-spacing:0.856px">&amp;</span>
<span class="t" style="left:60.8px;top:179.2px;font-size:12.5px;line-height:16px;font-weight:400;color:#000;letter-spacing:0.139px">Attributes</span>
<span class="t" style="left:211px;top:179.2px;font-size:12.5px;line-height:16px;font-weight:400;color:#000;letter-spacing:-0.048px">Description</span>
<span class="t" style="left:8px;top:200.5px;font-size:12.5px;line-height:16px;font-weight:400;color:#000;letter-spacing:0.259px">Application</span>
<span class="t" style="left:52px;top:220.5px;font-size:12.5px;line-height:16px;font-weight:700;color:#000;letter-spacing:0.007px">Unnamed</span>
<span class="t" style="left:73px;top:241.6px;font-size:12.5px;line-height:16px;font-weight:400;color:#000;letter-spacing:-0.251px">Cushioneer__5in_stroke</span>
<span class="t" style="left:11px;top:372.0px;font-size:12.5px;line-height:16px;font-weight:400;color:#000;letter-spacing:-0.031px">Property</span>
<span class="t" style="left:117px;top:372.0px;font-size:12.5px;line-height:16px;font-weight:400;color:#000;letter-spacing:-0.409px">Value</span>
<span class="t" style="left:16px;top:555.5px;font-size:12px;line-height:16px;font-weight:400;color:#000;letter-spacing:-0.949px">View</span>
<span class="t" style="left:64px;top:556.5px;font-size:12px;line-height:16px;font-weight:400;color:#000;letter-spacing:-0.340px">Data</span>
<span class="t" style="left:461px;top:65.5px;font-size:12.5px;line-height:16px;font-weight:400;color:#000;letter-spacing:-0.281px">Start</span>
<span class="t" style="left:322px;top:558.5px;font-size:12.5px;line-height:16px;font-weight:400;color:#000;letter-spacing:-0.469px">Start page</span>
<span class="t" style="left:443.5px;top:559.5px;font-size:12.5px;line-height:16px;font-weight:400;color:#000;letter-spacing:-0.495px">Unnamed : 1*</span>
<span class="t" style="left:2.6px;top:589.1px;font-size:11.3px;line-height:15px;font-weight:400;color:#000;letter-spacing:0.009px">Preselected:</span>
<span class="t" style="left:69.5px;top:589.1px;font-size:11.3px;line-height:15px;font-weight:400;color:#000;letter-spacing:0.035px">Unnamed.Cushioneer__5in_stroke.Vertex171</span>
<span class="t" style="left:305px;top:589.1px;font-size:11.3px;line-height:15px;font-weight:400;color:#000;letter-spacing:0.142px">(-80.695801</span>
<span class="t" style="left:370.8px;top:589.1px;font-size:11.3px;line-height:15px;font-weight:400;color:#000;letter-spacing:-0.923px">mm,</span>
<span class="t" style="left:396px;top:589.1px;font-size:11.3px;line-height:15px;font-weight:400;color:#000;letter-spacing:0.106px">-6.511965</span>
<span class="t" style="left:450px;top:589.1px;font-size:11.3px;line-height:15px;font-weight:400;color:#000;letter-spacing:-0.422px">m</span>
<span class="t" style="left:502px;top:589.1px;font-size:11.3px;line-height:15px;font-weight:400;color:#000;letter-spacing:-0.286px">CAD</span>
<span class="t" style="left:551px;top:589.1px;font-size:11.3px;line-height:15px;font-weight:400;color:#000;letter-spacing:0.040px">166.20</span>
<span class="t" style="left:590px;top:589.1px;font-size:11.3px;line-height:15px;font-weight:400;color:#000;letter-spacing:-1.414px">mm</span>
<span class="t" style="left:610px;top:589.1px;font-size:11.3px;line-height:15px;font-weight:400;color:#000;letter-spacing:0.344px">x</span>
<span class="t" style="left:620.8px;top:589.1px;font-size:11.3px;line-height:15px;font-weight:400;color:#000;letter-spacing:-0.060px">173.06</span>
<span class="t" style="left:658.8px;top:589.1px;font-size:11.3px;line-height:15px;font-weight:400;color:#000;letter-spacing:-1.314px">mm</span>
<span class="t" style="left:45.5px;top:420.5px;font-size:32.5px;line-height:42px;font-weight:400;color:#111;-webkit-text-stroke:1.4px #111;letter-spacing:-1.505px">The</span>
<span class="t" style="left:45.5px;top:452.5px;font-size:32.5px;line-height:42px;font-weight:400;color:#111;-webkit-text-stroke:1.4px #111;letter-spacing:-0.335px">WindowsClub</span>
</div>
</body></html>
